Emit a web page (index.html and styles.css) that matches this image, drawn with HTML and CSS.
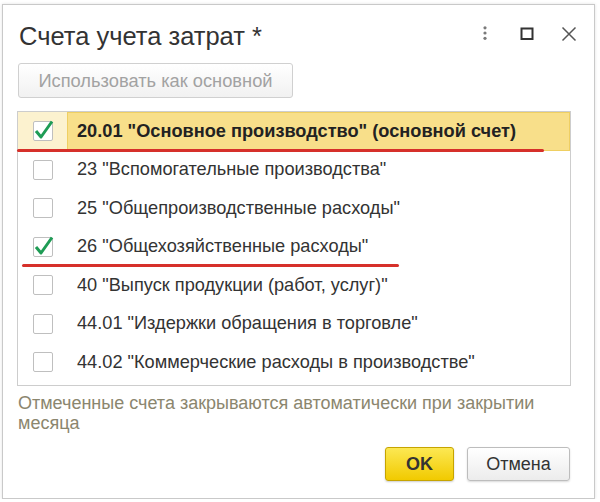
FILE: index.html
```html
<!DOCTYPE html>
<html lang="ru">
<head>
<meta charset="utf-8">
<title>Счета учета затрат</title>
<link rel="stylesheet" href="styles.css">
</head>
<body>
<div class="dialog">
  <div class="header">
    <div class="title">Счета учета затрат *</div>
    <div class="tools">
      <svg class="tool" width="16" height="16" viewBox="0 0 16 16"><circle cx="8" cy="1.8" r="1.6" fill="#7a7a7a"/><circle cx="8" cy="7" r="1.6" fill="#7a7a7a"/><circle cx="8" cy="12.3" r="1.6" fill="#7a7a7a"/></svg>
      <svg class="tool" width="16" height="16" viewBox="0 0 16 16"><rect x="2.5" y="2.5" width="11" height="10.5" fill="none" stroke="#333" stroke-width="2"/></svg>
      <svg class="tool" width="16" height="16" viewBox="0 0 16 16"><path d="M1.5 1.5 L14.5 14.5 M14.5 1.5 L1.5 14.5" stroke="#555" stroke-width="1.5" fill="none"/></svg>
    </div>
  </div>
  <button class="use-btn" type="button">Использовать как основной</button>
  <div class="list">
    <div class="row selected">
      <div class="cb-cell"><span class="cb checked"><svg width="22" height="22" viewBox="0 0 22 22"><path d="M3 11 L8 17 L19 1.5" fill="none" stroke="#1e9c55" stroke-width="3" stroke-linejoin="round"/></svg></span></div>
      <div class="text-cell bold">20.01 "Основное производство" (основной счет)</div>
    </div>
    <div class="row">
      <div class="cb-cell"><span class="cb"></span></div>
      <div class="text-cell">23 "Вспомогательные производства"</div>
    </div>
    <div class="row">
      <div class="cb-cell"><span class="cb"></span></div>
      <div class="text-cell">25 "Общепроизводственные расходы"</div>
    </div>
    <div class="row">
      <div class="cb-cell"><span class="cb checked"><svg width="22" height="22" viewBox="0 0 22 22"><path d="M3 11 L8 17 L19 1.5" fill="none" stroke="#1e9c55" stroke-width="3" stroke-linejoin="round"/></svg></span></div>
      <div class="text-cell">26 "Общехозяйственные расходы"</div>
    </div>
    <div class="row">
      <div class="cb-cell"><span class="cb"></span></div>
      <div class="text-cell">40 "Выпуск продукции (работ, услуг)"</div>
    </div>
    <div class="row">
      <div class="cb-cell"><span class="cb"></span></div>
      <div class="text-cell">44.01 "Издержки обращения в торговле"</div>
    </div>
    <div class="row">
      <div class="cb-cell"><span class="cb"></span></div>
      <div class="text-cell">44.02 "Коммерческие расходы в производстве"</div>
    </div>
    <span class="mark mark-1"></span>
    <span class="mark mark-2"></span>
  </div>
  <div class="hint">Отмеченные счета закрываются автоматически при закрытии месяца</div>
  <div class="actions">
    <button class="btn ok" type="button">OK</button>
    <button class="btn cancel" type="button">Отмена</button>
  </div>
</div>
</body>
</html>
```
FILE: styles.css
```css
html, body {
  margin: 0;
  padding: 0;
  background: #fff;
}
body {
  font-family: "Liberation Sans", Arial, sans-serif;
  color: #333;
}
.dialog {
  margin: 4px 0 0 2px;
  width: 593px;
  height: 495px;
  box-sizing: border-box;
  border: 1px solid #c9c9c9;
  box-shadow: 0 0 3px rgba(0, 0, 0, 0.12);
  background: #fff;
  display: flex;
  flex-direction: column;
  align-items: flex-start;
}
.header {
  align-self: stretch;
  display: flex;
  justify-content: space-between;
  align-items: flex-start;
  padding: 17px 17px 0 16px;
}
.title {
  font-size: 25.5px;
  line-height: 28px;
  color: #333;
}
.tools {
  display: flex;
  gap: 26px;
  margin-top: 4px;
}
.tool {
  display: block;
}
.use-btn {
  margin: 13px 0 0 15px;
  width: 275px;
  height: 35px;
  box-sizing: border-box;
  border: 1px solid #d0d0d0;
  border-radius: 3px;
  background: linear-gradient(#ffffff, #f1f1f1);
  color: #a2a2a2;
  font-family: inherit;
  font-size: 18.3px;
  padding: 0;
}
.list {
  position: relative;
  margin: 13px 0 0 14px;
  width: 554px;
  height: 275px;
  box-sizing: border-box;
  border: 1px solid #cdcdcd;
}
.row {
  display: flex;
  height: 38.5px;
  align-items: stretch;
}
.cb-cell {
  width: 49px;
  display: flex;
  align-items: center;
  padding-left: 15px;
  box-sizing: border-box;
}
.cb {
  position: relative;
  width: 20px;
  height: 20px;
  box-sizing: border-box;
  border: 1px solid #bfbfbf;
  border-radius: 2px;
  background: #fff;
}
.cb svg {
  position: absolute;
  left: -1px;
  top: -2px;
}
.text-cell {
  flex: 1;
  display: flex;
  align-items: center;
  padding-left: 10px;
  font-size: 18.2px;
  color: #333;
  white-space: nowrap;
}
.text-cell.bold {
  font-weight: bold;
  color: #222;
}
.row.selected .cb-cell {
  background: #fcf2cf;
}
.row.selected .text-cell {
  background: #f8df8a;
  box-shadow: inset 0 0 0 1px #efcf62;
}
.mark {
  position: absolute;
  height: 3px;
  background: #d6302a;
  border-radius: 2px;
}
.mark-1 {
  left: -1px;
  top: 37px;
  width: 527px;
}
.mark-2 {
  left: 4px;
  top: 152px;
  width: 377px;
}
.hint {
  margin: 7px 0 0 15px;
  width: 554px;
  font-size: 18px;
  line-height: 20px;
  color: #8b866e;
}
.actions {
  align-self: stretch;
  display: flex;
  justify-content: flex-end;
  gap: 13px;
  margin-top: 14px;
  padding-right: 24px;
}
.btn {
  height: 34px;
  box-sizing: border-box;
  border-radius: 3px;
  font-family: inherit;
  font-size: 18px;
  color: #333;
  padding: 0;
}
.ok {
  width: 69px;
  border: 1px solid #c6a400;
  background: linear-gradient(#fce853, #f1ca00);
  font-weight: bold;
  box-shadow: 0 1px 2px rgba(0, 0, 0, 0.2);
}
.cancel {
  width: 103px;
  border: 1px solid #bdbdbd;
  background: linear-gradient(#ffffff, #ececec);
  box-shadow: 0 1px 2px rgba(0, 0, 0, 0.15);
}
```
